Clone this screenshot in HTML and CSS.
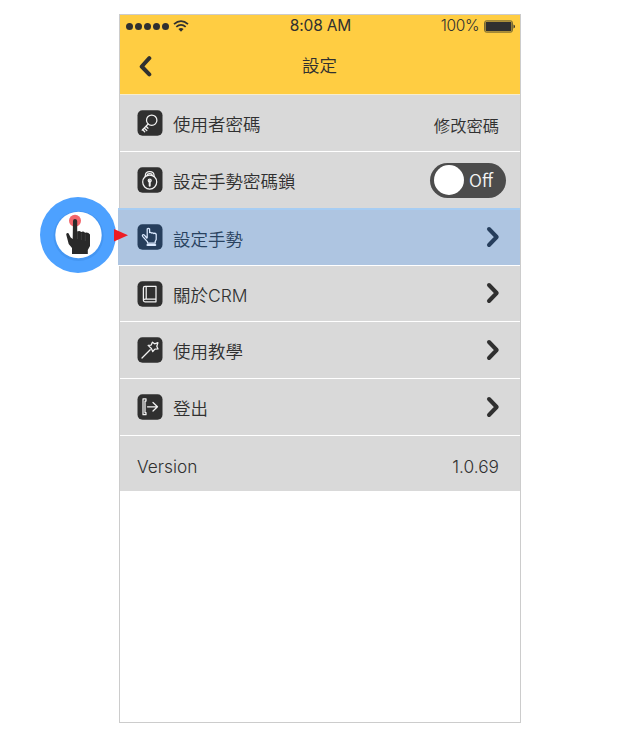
FILE: index.html
```html
<!DOCTYPE html>
<html lang="zh-Hant">
<head>
<meta charset="utf-8">
<title>設定</title>
<link rel="stylesheet" href="styles.css">
</head>
<body>
<main class="phone">
  <header class="header">
    <div class="status">
      <div class="signal">
        <i class="dot"></i><i class="dot"></i><i class="dot"></i><i class="dot"></i><i class="dot"></i>
        <svg class="wifi" width="16" height="12" viewBox="0 0 16 12" fill="none" stroke="#303030" stroke-width="1.8"><path d="M1 4.2Q8-2 15 4.2M3.3 6.9Q8 2.8 12.7 6.9"/><path d="M5.4 9Q8 6.9 10.6 9L8 11.8Z" fill="#303030" stroke="none"/></svg>
      </div>
      <span class="time">8:08 AM</span>
      <div class="power"><span class="percent">100%</span><svg width="31" height="13" viewBox="0 0 31 13"><rect x=".5" y=".8" width="28" height="11.4" rx="2" fill="none" stroke="#55502f" stroke-width=".8"/><rect x="1.5" y="1.8" width="26" height="9.4" rx="1" fill="#303030"/><path d="M29.5 4.5Q31 5 31 6.5T29.5 8.5Z" fill="#303030"/></svg></div>
    </div>
    <div class="nav">
      <svg class="back" width="13" height="21" viewBox="0 0 13 21"><path d="M10.3 2.2L2.7 10.5L10.3 18.4"/></svg>
      <h1 class="title">設定</h1>
    </div>
  </header>
  <section class="list">
    <div class="row">
      <svg class="icon" viewBox="0 0 26 26"><rect class="tile" x=".5" y=".3" width="25" height="25.4" rx="5"/><circle cx="14.7" cy="10.2" r="5.2"/><path d="M11.1 14L5.2 20.2M7.2 18L9.8 20.5M5.5 19.5L7.7 21.8M9 16.2L11 18.2"/></svg>
      <span class="label">使用者密碼</span><span class="action">修改密碼</span>
    </div>
    <div class="row">
      <svg class="icon" viewBox="0 0 26 26"><rect class="tile" x=".5" y=".3" width="25" height="25.4" rx="5"/><circle cx="12.7" cy="15" r="7"/><path d="M8.3 9.5V8.7Q8.3 4.6 12.7 4.6T17.1 8.7V9.5M10.3 8.5Q10.3 6.7 12.7 6.7T15.1 8.5"/><circle cx="12.7" cy="13.6" r="1.5"/><path d="M12.7 14V18.7" stroke-width="2"/></svg>
      <span class="label">設定手勢密碼鎖</span><span class="toggle"><i class="knob"></i><span class="off">Off</span></span>
    </div>
    <div class="row selected">
      <svg class="icon" viewBox="0 0 26 26"><rect class="tile" x=".5" y=".3" width="25" height="25.4" rx="5"/><path d="M9.8 14L7.6 11.3Q6.5 10.1 5.6 10.9Q5 11.6 5.8 12.6L10.5 17.8V19H18.2V17.5L19.2 15.5V10.2Q18 8.8 16.8 9.5Q15.7 8.4 14.5 9Q13.5 8 12.6 8.6V5Q11.3 3.6 10.2 5V13.8"/><path d="M10.5 21H18.2" stroke-width="2.2"/></svg>
      <span class="label">設定手勢</span>
      <svg class="chevron" width="14" height="22" viewBox="0 0 14 22"><path d="M3 3L10.7 11L3 19"/></svg>
    </div>
    <div class="row">
      <svg class="icon" viewBox="0 0 26 26"><rect class="tile" x=".5" y=".3" width="25" height="25.4" rx="5"/><path d="M8 5.4H19V20.8H8Q6.4 20.8 6.4 19.3V7Q6.4 5.4 8 5.4M9.2 5.4V18M6.4 19.3Q6.5 18.1 8 18.1H19"/></svg>
      <span class="label">關於<span class="crm">CRM</span></span>
      <svg class="chevron" width="14" height="22" viewBox="0 0 14 22"><path d="M3 3L10.7 11L3 19"/></svg>
    </div>
    <div class="row">
      <svg class="icon" viewBox="0 0 26 26"><rect class="tile" x=".5" y=".3" width="25" height="25.4" rx="5"/><path d="M5 21L13.2 12.7M11.1 8.4L14.2 8.1L15.4 5.2L17.6 6.8L20.9 5.7L19.8 9.2L21 12L17.9 12.1L15.7 14.5L14.4 11.5Z"/></svg>
      <span class="label">使用教學</span>
      <svg class="chevron" width="14" height="22" viewBox="0 0 14 22"><path d="M3 3L10.7 11L3 19"/></svg>
    </div>
    <div class="row">
      <svg class="icon" viewBox="0 0 26 26"><rect class="tile" x=".5" y=".3" width="25" height="25.4" rx="5"/><path d="M9 4.8H6V20.7H9M8 7V18.7M9 4.8V7H8M9 20.7V18.7H8M10.5 12.8H20.5M16 8.5L20.5 12.8L16 17"/></svg>
      <span class="label">登出</span>
      <svg class="chevron" width="14" height="22" viewBox="0 0 14 22"><path d="M3 3L10.7 11L3 19"/></svg>
    </div>
    <div class="row version">
      <span class="version-name">Version</span><span class="version-number">1.0.69</span>
    </div>
  </section>
</main>
<svg class="pointer" width="90" height="76" viewBox="0 0 90 76">
  <circle cx="38" cy="38" r="38" fill="#4da1ff"/><circle cx="38.5" cy="39" r="25" fill="#2d79ce" opacity=".25"/><circle cx="38.5" cy="38" r="23.2" fill="#fff"/>
  <circle cx="35" cy="23.7" r="6" fill="#f2656b"/>
  <path d="M33 24Q33 22 35 22T37.2 24V34.5Q39.5 33.2 41.2 35Q43.5 33.7 45 35.8Q48 34.8 50 37.5V49L47.8 53V57H32V51L28.7 47L26.2 37.5Q26.6 35.5 28.5 36.2L30.7 40.5L32.7 42Z" fill="#292929"/>
  <path d="M37.5 35V42M41.4 36V43M45.3 37V44" stroke="#464646" stroke-width=".7"/>
  <path d="M74 32L88 38.3L74 44.5Z" fill="#ee1c24"/>
</svg>
</body>
</html>
```
FILE: styles.css
```css
* { box-sizing: border-box; }
body { margin: 0; position: relative; height: 740px; overflow: hidden; padding: 14px 0 0 119px; background: #fff; color: #303030; font-family: "Noto Sans CJK TC", sans-serif; }
.phone { width: 402px; height: 709px; border: 1px solid #ccc; background: #fff; }
.header { height: 80px; background: #ffcd42; border-bottom: 1px solid #f7edcd; }
.status { height: 22px; display: grid; grid-template-columns: 1fr 1fr 1fr; align-items: center; padding: 0 5px 0 6px; font: 15.5px/22px Inter, sans-serif; }
.signal { display: flex; align-items: center; gap: 2px; }
.dot { width: 7px; height: 7px; border-radius: 50%; background: #303030; }
.wifi { margin-left: 2px; }
.time { text-align: center; white-space: nowrap; letter-spacing: -.15px; }
.power { display: flex; justify-content: flex-end; align-items: center; gap: 5px; }
.percent { font-size: 15.5px; font-weight: 300; letter-spacing: -.4px; }
.nav { height: 57px; display: grid; grid-template-columns: 40px 1fr 40px; align-items: center; }
.back { margin: 2px 0 0 19px; fill: none; stroke: #303030; stroke-width: 4; stroke-linecap: round; stroke-linejoin: round; }
.title { margin: -2px 1px 0 0; text-align: center; font-size: 17.5px; line-height: 26px; font-weight: 350; }
.list { display: grid; grid-template-rows: 57px 57px 57px 56px 57px 57px 55px; background: #d9d9d9; }
.row { display: flex; align-items: center; border-bottom: 1px solid #fff; padding: 0 20px 0 17px; }
.icon { width: 26px; height: 26px; flex: none; fill: none; stroke: #f3f3f3; stroke-width: 1.25; stroke-linejoin: round; stroke-linecap: round; }
.tile { fill: #303030; stroke: none; }
.label { flex: 1; margin-left: 10px; padding-top: 2px; font-size: 17.5px; line-height: 26px; font-weight: 350; white-space: nowrap; }
.crm { font: 300 17.5px Inter, sans-serif; letter-spacing: -.1px; }
.action { margin-right: 1px; font-size: 16.3px; font-weight: 350; line-height: 24px; padding-top: 3px; }
.toggle { display: flex; align-items: center; width: 76px; height: 35px; margin-right: -6px; padding-left: 4px; border-radius: 18px; background: #4c4c4c; color: #f3f3f3; }
.knob { width: 30px; height: 30px; border-radius: 50%; background: #fff; }
.off { margin: -1px 0 0 5px; font: 350 17.5px/25px "Noto Sans CJK TC", sans-serif; }
.chevron { margin: -1px 0 0; fill: none; stroke: #303030; stroke-width: 4; stroke-linecap: round; stroke-linejoin: round; }
.selected { position: relative; margin: -1px 0 0 -2px; padding-left: 19px; background: #aec5e1; border-top: 2px solid #a7cdf3; color: #29425f; }
.selected .icon { margin-top: -2px; }
.selected .tile { fill: #263e5c; }
.selected .icon { stroke: #dceaff; }
.selected .chevron { stroke: #263e5c; }
.version { justify-content: space-between; padding-top: 5px; border: 0; font: 300 17.3px Inter, sans-serif; }
.version-number { margin-right: 1px; }
.pointer { position: absolute; left: 40px; top: 197px; }
```
